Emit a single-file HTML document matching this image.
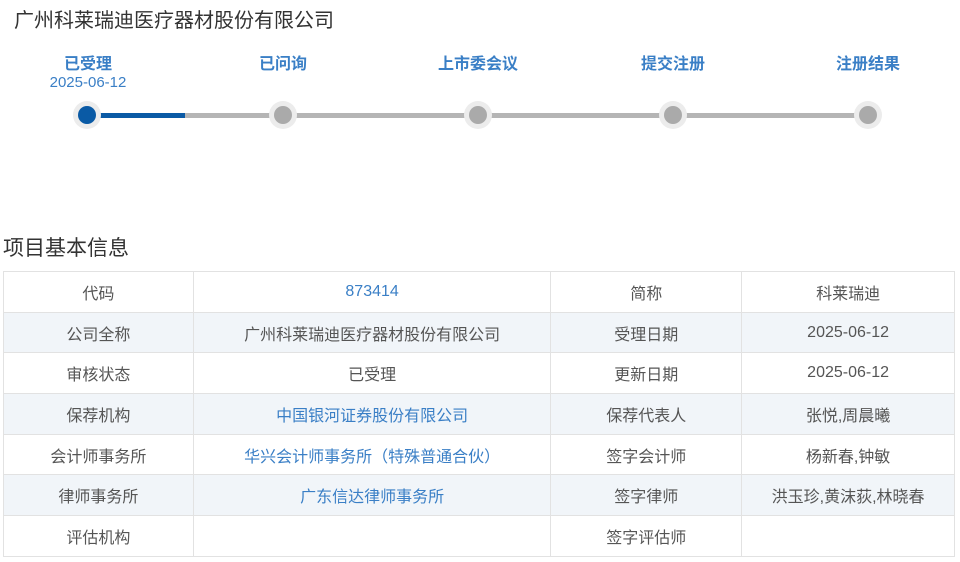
<!DOCTYPE html>
<html><head><meta charset="utf-8"><style>
body{margin:0;width:960px;height:562px;background:#fff;font-family:"Liberation Sans","Noto Sans CJK SC",sans-serif;position:relative;overflow:hidden}
.t{position:absolute;left:14px;top:4px;font-size:20px;color:#333}
.lab{position:absolute;top:50px;width:140px;margin-left:-70px;text-align:center;font-size:16px;font-weight:bold;color:#3a7fc6}
.date{position:absolute;top:74px;left:18px;width:140px;text-align:center;font-size:15px;color:#3a7fc6}
.line{position:absolute;top:113px;left:87px;width:781px;height:5px;background:#b5b5b5}
.blue{position:absolute;top:113px;left:87px;width:98px;height:5px;background:#0a5aa5}
.c{position:absolute;top:101px;width:28px;height:28px;margin-left:-14px;border-radius:50%;background:#ececec}
.c i{position:absolute;left:5px;top:5px;width:18px;height:18px;border-radius:50%;background:#aaa}
.h{position:absolute;left:3px;top:232px;font-size:21px;color:#333}
table{position:absolute;left:3px;top:271px;width:952px;border-collapse:collapse;font-size:16px;color:#555}
td{border:1px solid #e2e2e2;height:39.7px;padding:0;text-align:center}
tr:nth-child(even) td{background:#f1f5f9}
a{color:#3a7fc6;text-decoration:none}
</style></head><body>
<div class="t">广州科莱瑞迪医疗器材股份有限公司</div>
<div class="lab" style="left:88px">已受理</div>
<div class="lab" style="left:283px">已问询</div>
<div class="lab" style="left:478px">上市委会议</div>
<div class="lab" style="left:673px">提交注册</div>
<div class="lab" style="left:868px">注册结果</div>
<div class="date">2025-06-12</div>
<div class="line"></div><div class="blue"></div>
<div class="c" style="left:87px"><i style="background:#0a5aa5"></i></div>
<div class="c" style="left:283px"><i></i></div>
<div class="c" style="left:478px"><i></i></div>
<div class="c" style="left:673px"><i></i></div>
<div class="c" style="left:868px"><i></i></div>
<div class="h">项目基本信息</div>
<table>
<colgroup><col style="width:190px"><col style="width:358px"><col style="width:191px"><col style="width:213px"></colgroup>
<tr><td>代码</td><td><a>873414</a></td><td>简称</td><td>科莱瑞迪</td></tr>
<tr><td>公司全称</td><td>广州科莱瑞迪医疗器材股份有限公司</td><td>受理日期</td><td>2025-06-12</td></tr>
<tr><td>审核状态</td><td>已受理</td><td>更新日期</td><td>2025-06-12</td></tr>
<tr><td>保荐机构</td><td><a>中国银河证券股份有限公司</a></td><td>保荐代表人</td><td>张悦,周晨曦</td></tr>
<tr><td>会计师事务所</td><td><a>华兴会计师事务所（特殊普通合伙）</a></td><td>签字会计师</td><td>杨新春,钟敏</td></tr>
<tr><td>律师事务所</td><td><a>广东信达律师事务所</a></td><td>签字律师</td><td>洪玉珍,黄沫荻,林晓春</td></tr>
<tr><td>评估机构</td><td></td><td>签字评估师</td><td></td></tr>
</table>
</body></html>
